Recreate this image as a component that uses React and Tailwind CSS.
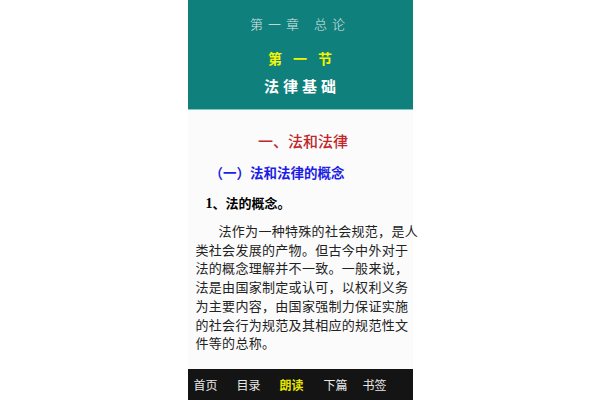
const cjk = { fontFamily: '"Noto Sans CJK SC", "Noto Sans", sans-serif' };

const lines = [
  "法作为一种特殊的社会规范，是人",
  "类社会发展的产物。但古今中外对于",
  "法的概念理解并不一致。一般来说，",
  "法是由国家制定或认可，以权利义务",
  "为主要内容，由国家强制力保证实施",
  "的社会行为规范及其相应的规范性文",
  "件等的总称。",
];

const tabs = [
  { label: "首页", w: "w-[43px]" },
  { label: "目录", w: "w-[43px]" },
  { label: "朗读", w: "w-[44px]", active: true },
  { label: "下篇", w: "w-[39px]" },
  { label: "书签", w: "w-[39px]" },
];

export default function App() {
  return (
    <div className="w-[600px] h-[400px] bg-white flex justify-center" style={cjk}>
      <div className="w-[225px] h-full flex flex-col">
        <header className="h-[110px] bg-[#0f807c] border-b border-[#7fc9c6] flex flex-col items-center pt-[14px]">
          <p className="text-[13px] leading-[20px] text-[#dfe6e6] tracking-[5px] font-light">
            第一章<span className="inline-block w-[10px]" />总论
          </p>
          <p className="mt-[14px] text-[14px] leading-[20px] font-bold text-[#f4f400] tracking-[11px] pl-[11px]">
            第一节
          </p>
          <p className="mt-[8px] text-[15px] leading-[20px] font-bold text-white tracking-[4px] pl-[4px]">
            法律基础
          </p>
        </header>

        <main className="flex-1 bg-[#fbfbfb] pl-[8px] pr-[4px] pt-[21px]">
          <h2 className="text-center text-[15px] leading-[20px] font-medium text-[#c0262a] pl-[2px]">
            一、法和法律
          </h2>
          <h3 className="mt-[11px] pl-[14px] text-[13.5px] leading-[20px] font-bold text-[#1d1de6]">
            （一）法和法律的概念
          </h3>
          <h4 className="mt-[11px] pl-[10px] text-[13px] leading-[20px] font-bold text-black">
            <span style={{ fontFamily: '"Liberation Serif", serif' }} className="text-[14px]">1</span>、法的概念。
          </h4>
          <div className="mt-[8px] text-[13px] leading-[18.7px] text-[#222] tracking-[0.3px]">
            {lines.map((l, i) => (
              <p key={i} className={"whitespace-nowrap" + (i === 0 ? " pl-[23px]" : "")}>
                {l}
              </p>
            ))}
          </div>
        </main>

        <nav className="h-[31px] bg-[#141414] flex items-center pl-[6px]">
          {tabs.map((t) => (
            <span
              key={t.label}
              className={
                t.w +
                " text-[12px] leading-[20px] " +
                (t.active ? "text-[#e6e600] font-bold" : "text-[#e8e8e8]")
              }
            >
              {t.label}
            </span>
          ))}
        </nav>
      </div>
    </div>
  );
}
